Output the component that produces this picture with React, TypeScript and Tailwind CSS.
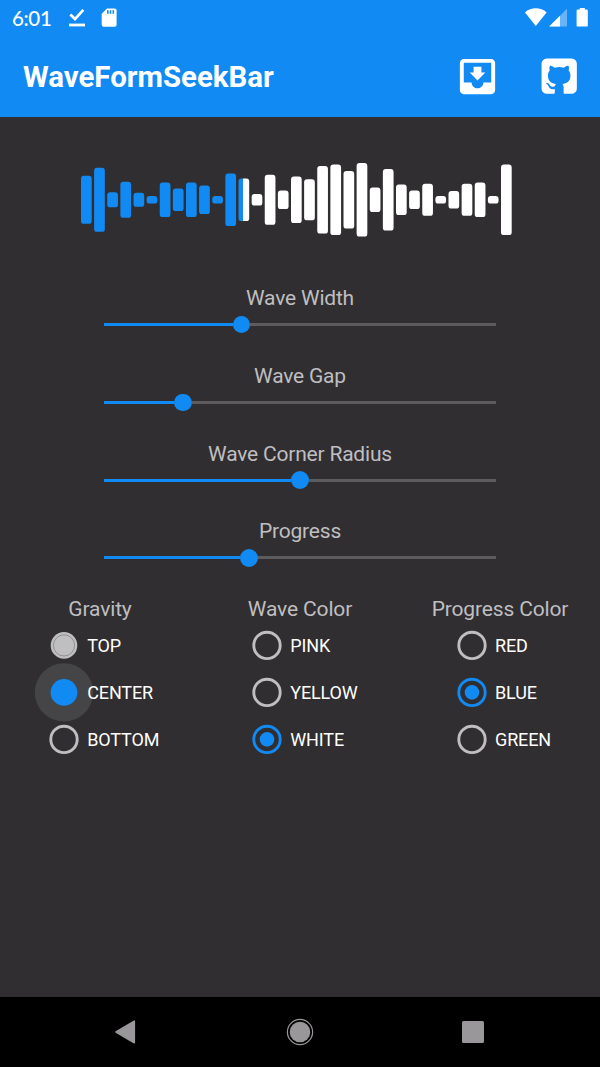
import React from "react";

const waveHeights = [
  48, 64, 15, 36, 14, 7.5, 34.5, 22.5, 34.5, 28.5, 7.5, 52.5, 42.5, 11.5, 50, 18.5, 46.5, 41, 67.5, 70.5, 57.5,
  73.5, 24.5, 61.5, 30.5, 18.5, 32, 7.5, 17.5, 32, 34.5, 7.5, 70.5,
];

const WAVE_PITCH = 13.125;
const PLAYED_WIDTH = 162.4;

function StatusBar() {
  return (
    <div className="flex h-9 items-center text-white">
      <span className="ml-[12px] w-[57px] font-['Lato'] text-[20.5px] font-medium leading-9 tracking-[-0.35px]">6:01</span>
      <svg className="h-9 w-4" viewBox="0 0 16 36" fill="none">
        <path d="M1.3 14.6 6 19.1 14.3 9.8" stroke="white" strokeWidth="2.7" />
        <path d="M0 25h16" stroke="white" strokeWidth="2.8" />
      </svg>
      <svg className="ml-4 h-9 w-4" viewBox="0 0 16 36">
        <path d="M6 8.4h7.6a2 2 0 0 1 2 2v14.4a2 2 0 0 1-2 2H2.7a2 2 0 0 1-2-2V13.7z" fill="white" />
        <path d="M6.8 10.3v3.5M9.5 10.3v3.5M12.3 10.3v3.5" stroke="#118af3" strokeWidth="1.6" />
      </svg>
      <svg className="ml-auto mr-[10px] h-9 w-[66px]" viewBox="0 0 66 36">
        <path d="M1 12.4C7 6.8 16.6 6.8 22.6 12.4L11.8 26.1z" fill="white" />
        <path d="M25.2 26.5 43 8.8v17.7z" fill="#67b4f8" />
        <path d="M25.2 26.5 36 15.7v10.8z" fill="white" />
        <path
          d="M55.8 7.9h5v1.5h1.8a1.2 1.2 0 0 1 1.2 1.2v14.8a1.2 1.2 0 0 1-1.2 1.2h-8.8a1.2 1.2 0 0 1-1.2-1.2V10.6a1.2 1.2 0 0 1 1.2-1.2h2z"
          fill="white"
        />
      </svg>
    </div>
  );
}

function InboxIcon() {
  return (
    <svg className="h-[47px] w-[47px]" viewBox="0 0 24 24" fill="white">
      <path d="M19 3H4.99c-1.11 0-1.98.9-1.98 2L3 19c0 1.1.88 2 1.99 2H19c1.1 0 2-.9 2-2V5c0-1.1-.9-2-2-2zm0 12h-4c0 1.66-1.35 3-3 3s-3-1.34-3-3H4.99V5H19v10zm-3-5h-2V7h-4v3H8l4 4 4-4z" />
    </svg>
  );
}

function GithubIcon() {
  return (
    <svg className="h-[42.4px] w-[42.4px]" viewBox="0 0 24 24" fill="white">
      <path d="M5 2H19A3 3 0 0 1 22 5V19A3 3 0 0 1 19 22H14.85C14.5 21.92 14.5 21.24 14.5 21V18.26C14.5 17.33 14.17 16.72 13.81 16.41C16.04 16.16 18.38 15.32 18.38 11.5C18.38 10.39 18 9.5 17.35 8.79C17.45 8.54 17.8 7.5 17.25 6.15C17.25 6.15 16.41 5.88 14.5 7.17C13.71 6.95 12.85 6.84 12 6.84C11.15 6.84 10.29 6.95 9.5 7.17C7.59 5.88 6.75 6.15 6.75 6.15C6.2 7.5 6.55 8.54 6.65 8.79C6 9.5 5.62 10.39 5.62 11.5C5.62 15.31 7.95 16.17 10.17 16.42C9.89 16.67 9.63 17.11 9.54 17.76C8.97 18 7.5 18.45 6.63 16.93C6.63 16.93 6.1 15.97 5.1 15.9C5.1 15.9 4.12 15.88 5 16.5C5 16.5 5.68 16.81 6.14 17.97C6.14 17.97 6.73 19.91 9.5 19.31V21C9.5 21.24 9.5 21.92 9.14 22H5A3 3 0 0 1 2 19V5A3 3 0 0 1 5 2Z" />
    </svg>
  );
}

function WaveForm() {
  return (
    <svg className="ml-[81px] mt-[43px] h-20 w-[432px] shrink-0" viewBox="0 0 432 80">
      <defs>
        <linearGradient id="played" gradientUnits="userSpaceOnUse" x1="0" x2="432" y1="0" y2="0">
          <stop offset={PLAYED_WIDTH / 432} stopColor="#118af3" />
          <stop offset={PLAYED_WIDTH / 432} stopColor="white" />
        </linearGradient>
      </defs>
      {waveHeights.map((h, i) => (
        <rect key={i} x={i * WAVE_PITCH} y={39.8 - h / 2} width={10.7} height={h} rx={2.9} fill="url(#played)" />
      ))}
    </svg>
  );
}

function Slider({ label, value }: { label: string; value: number }) {
  return (
    <div className="flex h-[77.8px] flex-col items-center">
      <div className="h-[28px] whitespace-nowrap text-[21px] leading-[28px] tracking-[-0.2px] text-[#bfbec0]">{label}</div>
      <div className="flex h-[25px] w-[392px] items-center">
        <div className="h-[3px] bg-[#118af3]" style={{ width: value - 8.3 }} />
        <div className="z-10 h-[17.6px] w-[17.6px] shrink-0 rounded-full bg-[#118af3]" />
        <div className="h-[3px] grow bg-[#5c5b5d]" />
      </div>
    </div>
  );
}

type RadioState = "off" | "on" | "releasing" | "pressed";

function RadioMark({ state }: { state: RadioState }) {
  return (
    <svg className="h-[46.8px] w-[30px] shrink-0 overflow-visible" viewBox="0 0 30 46.8" fill="none">
      {state === "off" && <circle cx="15" cy="23.4" r="13.2" stroke="#bfbec0" strokeWidth="2.9" />}
      {state === "on" && (
        <>
          <circle cx="15" cy="23.4" r="13.2" stroke="#118af3" strokeWidth="2.9" />
          <circle cx="15" cy="23.4" r="7.3" fill="#118af3" />
        </>
      )}
      {state === "releasing" && (
        <>
          <circle cx="15" cy="23.4" r="13.3" fill="#bfbec0" />
          <circle cx="15" cy="23.4" r="10.6" stroke="#858486" strokeWidth="0.8" />
        </>
      )}
      {state === "pressed" && (
        <>
          <circle cx="15" cy="23.4" r="29.2" fill="#454446" />
          <circle cx="15" cy="23.4" r="13.4" fill="#118af3" />
        </>
      )}
    </svg>
  );
}

function RadioGroup({ title, inset, options }: { title: string; inset: string; options: [string, RadioState][] }) {
  return (
    <section>
      <h2 className="h-[27.2px] whitespace-nowrap text-center text-[21px] leading-[28px] tracking-[-0.15px] text-[#bfbec0]">{title}</h2>
      <div className={inset}>
        {options.map(([label, state]) => (
          <div key={label} className="flex h-[46.7px] items-center">
            <RadioMark state={state} />
            <span className="z-10 ml-[8.5px] text-[18px] tracking-[-0.12px] text-white">{label}</span>
          </div>
        ))}
      </div>
    </section>
  );
}

export default function App() {
  return (
    <div className="flex h-[1067px] w-[600px] flex-col overflow-hidden bg-[#302e30] font-['Roboto',sans-serif]">
      <header className="h-[117px] shrink-0 bg-[#118af3]">
        <StatusBar />
        <div className="flex h-[80px] items-center">
          <h1 className="ml-[23px] grow pt-[2px] text-[29.4px] font-bold leading-[40px] text-white">WaveFormSeekBar</h1>
          <InboxIcon />
          <div className="ml-[37px] mr-[20px]">
            <GithubIcon />
          </div>
        </div>
      </header>
      <main className="flex grow flex-col">
        <WaveForm />
        <div className="mt-[44px]">
          <Slider label="Wave Width" value={137} />
          <Slider label="Wave Gap" value={78.5} />
          <Slider label="Wave Corner Radius" value={195.5} />
          <Slider label="Progress" value={144.7} />
        </div>
        <div className="grid grid-cols-3">
          <RadioGroup
            title="Gravity"
            inset="pl-[48.7px]"
            options={[
              ["TOP", "releasing"],
              ["CENTER", "pressed"],
              ["BOTTOM", "off"],
            ]}
          />
          <RadioGroup
            title="Wave Color"
            inset="pl-[51.7px]"
            options={[
              ["PINK", "off"],
              ["YELLOW", "off"],
              ["WHITE", "on"],
            ]}
          />
          <RadioGroup
            title="Progress Color"
            inset="pl-[56.5px]"
            options={[
              ["RED", "off"],
              ["BLUE", "on"],
              ["GREEN", "off"],
            ]}
          />
        </div>
      </main>
      <nav className="flex h-[70px] shrink-0 items-center justify-between bg-black pl-[114px] pr-[116px]">
        <svg className="h-[26px] w-[22px]" viewBox="0 0 22 26">
          <path d="M2 13 20.3 2.2v21.6z" fill="#999799" stroke="#999799" strokeWidth="1.6" strokeLinejoin="round" />
        </svg>
        <svg className="ml-[2px] h-[28px] w-[28px]" viewBox="0 0 28 28">
          <circle cx="14" cy="14" r="12.6" fill="none" stroke="#999799" strokeWidth="1.2" />
          <circle cx="14" cy="14" r="10.3" fill="#999799" />
        </svg>
        <div className="h-[22px] w-[22px] rounded-[1.5px] bg-[#999799]" />
      </nav>
    </div>
  );
}
